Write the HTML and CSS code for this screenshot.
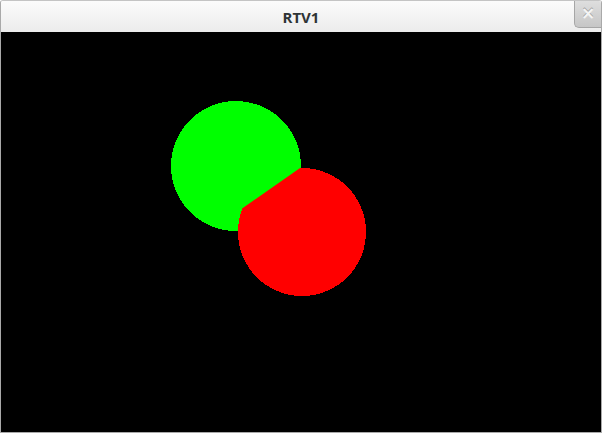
FILE: index.html
```html
<!DOCTYPE html>
<html>
<head>
<meta charset="utf-8">
<link rel="stylesheet" href="styles.css">
</head>
<body>
<div class="window">
  <div class="titlebar">
    <div class="spacer"></div>
    <div class="title">RTV1</div>
    <div class="close">×</div>
  </div>
  <div class="canvas">
    <svg width="600" height="400" viewBox="0 0 600 400" shape-rendering="crispEdges">
      <defs>
        <clipPath id="below">
          <polygon points="0,345.3 600,-74.7 600,400 0,400"/>
        </clipPath>
      </defs>
      <rect width="600" height="400" fill="#000"/>
      <circle cx="235" cy="134" r="65" fill="#00ff00"/>
      <circle cx="301" cy="200" r="64" fill="#ff0000" clip-path="url(#below)"/>
    </svg>
  </div>
</div>
</body>
</html>
```
FILE: styles.css
```css
html, body {
  margin: 0;
  padding: 0;
  background: #ffffff;
}
.window {
  width: 600px;
  height: 431px;
  border: 1px solid #a9a9a9;
  border-top-color: #c4c4c4;
  border-radius: 3px 3px 0 0;
  display: flex;
  flex-direction: column;
  overflow: hidden;
}
.titlebar {
  height: 31px;
  display: grid;
  grid-template-columns: 1fr auto 1fr;
  background: linear-gradient(#fbfbfb, #ececec);
  font-family: "Open Sans", "DejaVu Sans", sans-serif;
}
.title {
  align-self: center;
  font-size: 15px;
  font-weight: 700;
  color: #2e3436;
  line-height: 31px;
  margin-top: 1px;
}
.close {
  justify-self: end;
  align-self: start;
  width: 27px;
  height: 27px;
  box-sizing: border-box;
  border-left: 1px solid #a6a6a6;
  border-bottom: 1px solid #a6a6a6;
  border-bottom-left-radius: 5px;
  background: linear-gradient(#dedede, #c6c6c6);
  color: #f4f4f4;
  font-family: "DejaVu Sans", sans-serif;
  font-size: 17px;
  font-weight: 700;
  line-height: 25px;
  text-align: center;
  text-shadow: 0 -1px 0 #9a9a9a;
}
.canvas {
  width: 600px;
  height: 400px;
  background: #000;
}
.canvas svg {
  display: block;
}
```
